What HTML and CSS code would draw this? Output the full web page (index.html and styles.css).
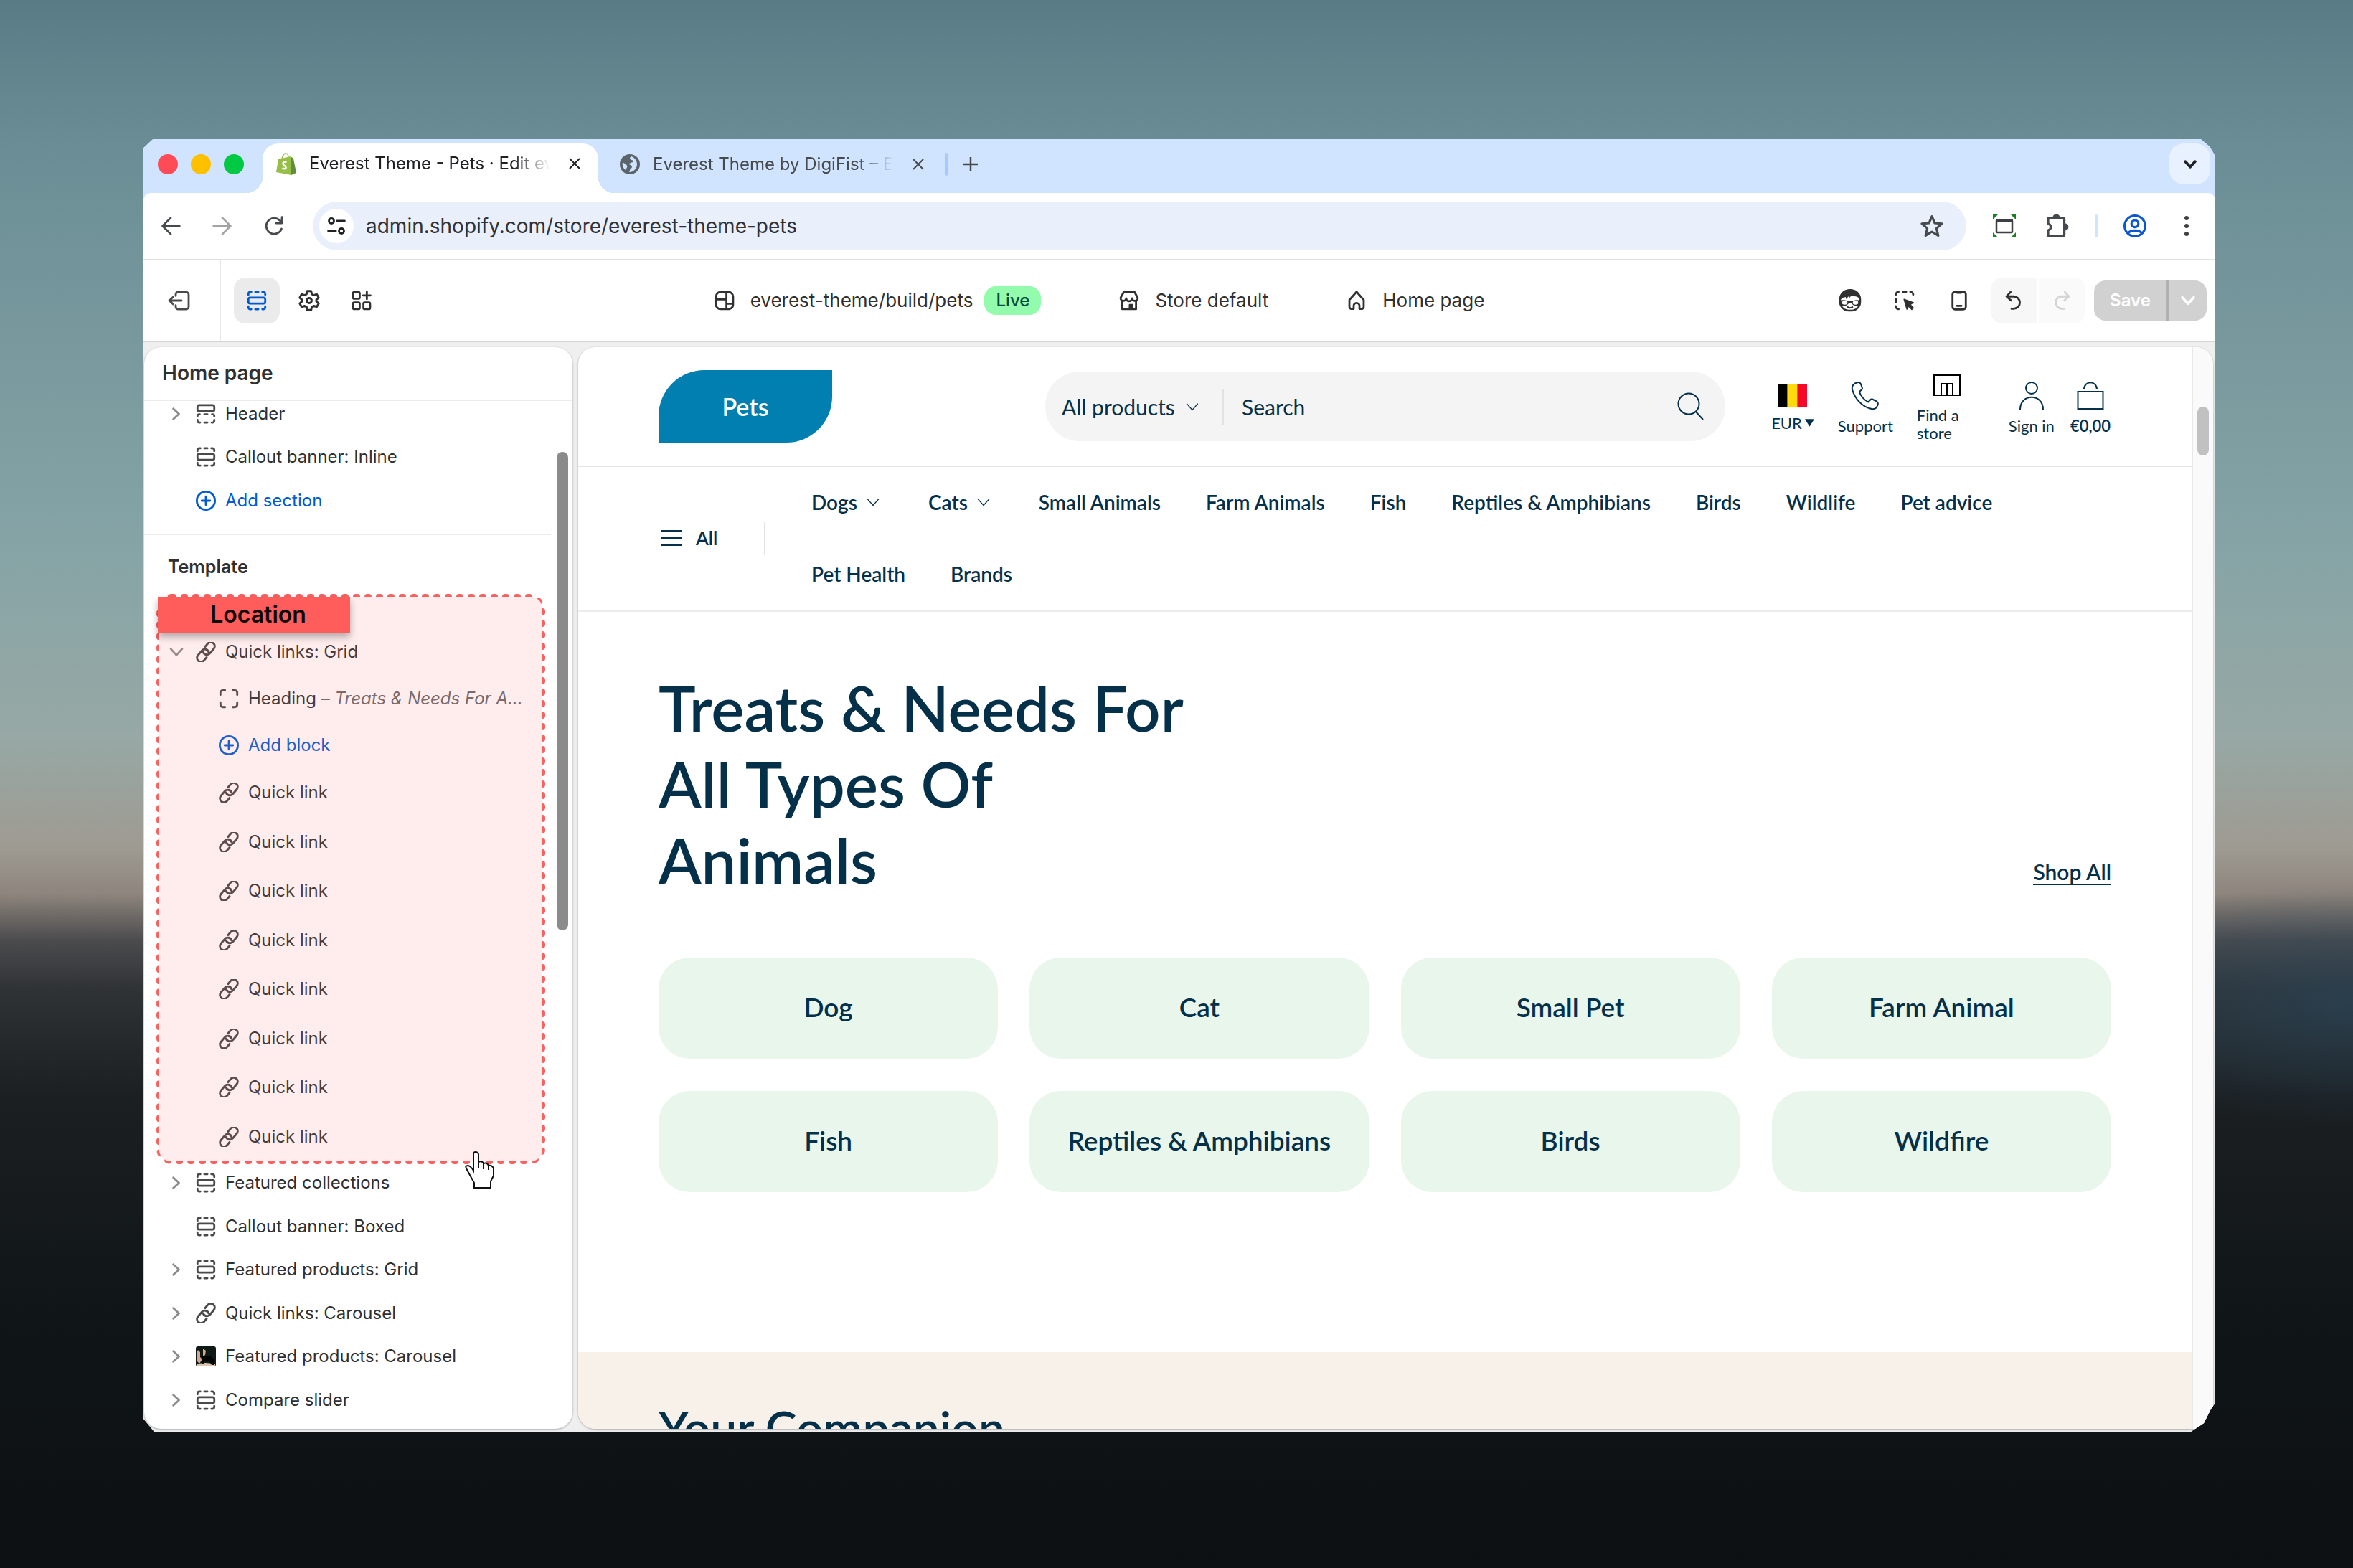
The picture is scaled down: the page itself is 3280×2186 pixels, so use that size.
FILE: index.html
```html
<!DOCTYPE html>
<html lang="en">
<head>
    <meta charset="UTF-8">
    <title>Everest Theme - Pets</title>
    <link rel="stylesheet" href="styles.css">
</head>
<body>
    <!-- icon sprite -->
    <svg class="sprite" xmlns="http://www.w3.org/2000/svg">
        <symbol id="section" viewBox="0 0 16 16">
            <rect x="1.3" y="5.6" width="13.4" height="4.8" rx="1.4"/>
            <path d="M1.3 3.4V2.6a1.6 1.6 0 0 1 1.3-1.5h1M6.8 1.1h2.4M12.4 1.1h.9a1.6 1.6 0 0 1 1.4 1.5v.8M1.3 12.6v.8a1.6 1.6 0 0 0 1.3 1.5h1M6.8 14.9h2.4M12.4 14.9h.9a1.6 1.6 0 0 0 1.4-1.5v-.8"/>
        </symbol>
        <symbol id="section-top" viewBox="0 0 16 16">
            <rect x="1.3" y="1.1" width="13.4" height="4.8" rx="1.4"/>
            <path d="M1.3 9.8v-.2a1.2 1.2 0 0 1 1.2-1.2h.6M6.8 8.4h2.4M12.9 8.4h.6a1.2 1.2 0 0 1 1.2 1.2v.2M1.3 12.8v.6a1.6 1.6 0 0 0 1.3 1.5h.8M6.8 14.9h2.4M12.6 14.9h.8a1.6 1.6 0 0 0 1.3-1.5v-.6"/>
        </symbol>
        <symbol id="link" viewBox="0 0 24 24">
            <g transform="rotate(-50 12 12) translate(-3 -3) scale(1.25)" stroke-width="2">
                <path d="M8.500 15.800H4.800a3.800 3.800 0 0 1 0-7.600h5.700a3.800 3.800 0 0 1 3.200 5.800"/>
                <path d="M15.500 8.200h3.700a3.800 3.800 0 0 1 0 7.600h-5.700a3.800 3.800 0 0 1-3.200-5.800"/>
            </g>
        </symbol>
        <symbol id="plus-circle" viewBox="0 0 16 16"><circle cx="8" cy="8" r="7.200"/><path d="M8 4.700v6.600M4.700 8h6.600"/></symbol>
        <symbol id="block" viewBox="0 0 16 16"><path d="M1.300 5V3.300a2 2 0 0 1 2-2H5M11 1.300h1.700a2 2 0 0 1 2 2V5M14.700 11v1.700a2 2 0 0 1-2 2H11M5 14.700H3.300a2 2 0 0 1-2-2V11"/></symbol>
        <symbol id="chev-right" viewBox="0 0 16 16"><path d="M5.500 3.800 10 8l-4.500 4.200"/></symbol>
        <symbol id="chev-down" viewBox="0 0 16 16"><path d="M3.500 5.500 8 10.500l4.500-5"/></symbol>
        <symbol id="close" viewBox="0 0 16 16"><path d="m1.500 1.500 13 13M14.500 1.500l-13 13"/></symbol>
    </svg>

    <main class="window">
        <header class="tabstrip">
            <div class="lights"><span class="red"></span><span class="yellow"></span><span class="green"></span></div>
            <div class="tab active">
                <svg class="favicon" viewBox="0 0 28 32">
                    <path d="M8 9c1-5 4-8 6-7 2 0 3 3 3 6" fill="none" stroke="#95bf47" stroke-width="1.500"/>
                    <path d="M3 10l17-4 1 26L0 28z" fill="#95bf47"/><path d="M20 6l4 3 4 20-7 3z" fill="#5e8e3e"/>
                    <path d="M14.500 14c-3-1-5 0-5 2 0 3 4 3 4 5.500 0 2-2.500 2.500-5 .5" fill="none" stroke="#fff" stroke-width="2.600"/>
                </svg>
                <span class="tab-title">Everest Theme - Pets · Edit everest</span>
                <button class="plain" aria-label="Close tab"><svg class="icon bold s16"><use href="#close"/></svg></button>
            </div>
            <div class="tab">
                <svg class="favicon" viewBox="0 0 28 28">
                    <circle cx="14" cy="14" r="14" fill="#5b636b"/>
                    <path d="M16 3c-3 2-2 4 0 5 2 0 3 1 2 3-2 1-5 1-5 3 2 1 4 2 4 4-1 2-3 2-3 5l-1 2a11 11 0 0 0 11-11c0-5-3-9-8-11zM4 11c2 2 5 2 6 5 1 2-1 3-1 5l-1 1a11 11 0 0 1-4-11z" fill="#d0e3ff"/>
                </svg>
                <span class="tab-title">Everest Theme by DigiFist – Everest</span>
                <button class="plain" aria-label="Close tab"><svg class="icon bold s16"><use href="#close"/></svg></button>
            </div>
            <span class="tab-divider"></span>
            <button class="plain new-tab" aria-label="New tab"><svg class="icon bold s20" viewBox="0 0 16 16"><path d="M8 0v16M0 8h16"/></svg></button>
            <button class="tab-search" aria-label="Search tabs"><svg class="icon heavy s24"><use href="#chev-down"/></svg></button>
        </header>

        <div class="toolbar">
            <div class="history">
                <button class="plain" aria-label="Back"><svg class="icon s28" viewBox="0 0 16 16"><path d="M15 8H1.500M8 1.500 1.500 8 8 14.500"/></svg></button>
                <button class="plain faded" aria-label="Forward"><svg class="icon s28" viewBox="0 0 16 16"><path d="M1 8h13.500M8 1.500 14.500 8 8 14.500"/></svg></button>
                <button class="plain" aria-label="Reload"><svg class="icon s28" viewBox="0 0 16 16"><path d="M14 10.300A6.300 6.300 0 1 1 12.600 3.600L14.200 5.400M14.300 1v4.700H9.600"/></svg></button>
            </div>
            <div class="urlbar">
                <button class="site-info" aria-label="Site information"><svg class="icon s28" viewBox="0 0 16 16"><circle cx="4" cy="4" r="2"/><path d="M8.500 4h6M1.500 12h6"/><circle cx="12" cy="12" r="2"/></svg></button>
                <input class="url" type="text" aria-label="Address" value="admin.shopify.com/store/everest-theme-pets">
                <button class="plain" aria-label="Bookmark"><svg class="icon s32" viewBox="0 0 16 16"><path d="m8 1.300 2 4.700 5 .4-3.800 3.300 1.200 5L8 12l-4.400 2.700 1.200-5L1 6.400 6 6z"/></svg></button>
            </div>
            <div class="extensions">
                <button class="plain capture" aria-label="Capture"><svg class="s32" viewBox="0 0 32 32"><path d="M0 0h7L0 7zM32 0v7l-7-7zM0 32v-7l7 7zM32 32h-7l7-7z" fill="#12831f"/><rect x="5" y="8" width="22" height="17" rx="1" fill="none" stroke="#3c4043" stroke-width="2.500"/><path d="M4 7h24v4H4z" fill="#3c4043"/></svg></button>
                <button class="plain" aria-label="Extensions"><svg class="icon s32" viewBox="0 0 16 16"><path d="M1.500 2.500H12a.8.8 0 0 1 .8.800v11a.8.8 0 0 1-.8.800H2.300a.8.8 0 0 1-.8-.8v-3.300a2.300 2.300 0 0 0 0-4.500z"/><path d="M5.500 2.200a1.700 1.700 0 0 1 3.400 0zM13.200 7a1.700 1.700 0 0 1 0 3.400z" fill="currentColor"/></svg></button>
                <span class="ext-divider"></span>
                <button class="plain profile" aria-label="Profile"><svg class="icon s32" viewBox="0 0 16 16"><circle cx="8" cy="8" r="7.200"/><circle cx="8" cy="6.400" r="2.400"/><path d="M3 13c2.500-2.400 7.500-2.400 10 0"/></svg></button>
                <button class="plain" aria-label="Menu"><svg class="s32" viewBox="0 0 32 32" fill="#3c4043"><circle cx="16" cy="5" r="3"/><circle cx="16" cy="16" r="3"/><circle cx="16" cy="27" r="3"/></svg></button>
            </div>
        </div>

        <div class="editor-bar">
            <button class="exit" aria-label="Exit"><svg class="icon light s32" viewBox="0 0 16 16"><path d="M5.500 4.700V3.700A1.800 1.800 0 0 1 7.300 1.900h5.200A2 2 0 0 1 14.500 3.900v8.200a2 2 0 0 1-2 2H7.300A1.800 1.800 0 0 1 5.500 12.300v-1M9.500 8H1M3.700 5.500 1 8l2.700 2.500"/></svg></button>
            <div class="tools">
                <button class="tool selected" aria-label="Sections"><svg class="icon s28"><use href="#section"/></svg></button>
                <button class="tool" aria-label="Theme settings"><svg class="icon s32" viewBox="0 0 24 24"><path class="mid" d="M10 2h4l.7 3.200 2.100 1.200 3.100-1 2 3.500-2.400 2.200v1.800l2.400 2.200-2 3.500-3.100-1-2.100 1.200L14 22h-4l-.7-3.200-2.100-1.200-3.100 1-2-3.500 2.400-2.200v-1.800L2.100 8.900l2-3.500 3.100 1 2.100-1.200z"/><circle class="mid" cx="12" cy="12" r="2.600"/></svg></button>
                <button class="tool" aria-label="App embeds"><svg class="icon s28" viewBox="0 0 16 16"><rect x="1.200" y="1.200" width="5.300" height="5.300" rx="1"/><rect x="1.200" y="9.500" width="5.300" height="5.300" rx="1"/><rect x="9.500" y="9.500" width="5.300" height="5.300" rx="1"/><path d="M12.200 1v5.800M9.300 3.900h5.800"/></svg></button>
            </div>
            <div class="crumbs">
                <button class="crumb"><svg class="icon s28" viewBox="0 0 16 16"><rect x="1.200" y="1.200" width="13.600" height="13.600" rx="3.500"/><path d="M9.500 1.500v13M1.500 7h8M9.500 10.500h5"/></svg>everest-theme/build/pets<span class="badge">Live</span></button>
                <button class="crumb"><svg class="icon s28" viewBox="0 0 16 16"><path d="M3.800 1h8.400l2.600 4.800a2.200 2.200 0 0 1-4.500.4 2.300 2.300 0 0 1-4.600 0 2.200 2.200 0 0 1-4.500-.4zM2.500 8.500v6.300h11V8.500M8.500 14.500v-3h2v3"/></svg>Store default</button>
                <button class="crumb"><svg class="icon s28" viewBox="0 0 16 16"><path d="M2.300 7.500 8 1l5.700 6.500v5.500a1.600 1.600 0 0 1-1.600 1.600h-1.800v-2.400a2.300 2.300 0 0 0-4.600 0v2.400H3.900A1.600 1.600 0 0 1 2.300 13z"/></svg>Home page</button>
            </div>
            <div class="actions">
                <button class="tool" aria-label="Sidekick"><svg class="s32" viewBox="0 0 32 32"><rect x="2" y="2" width="28" height="28" rx="12" fill="#fff" stroke="#303030" stroke-width="2.500"/><path d="M2 15C1 5 8 0 16 0s15 5 14 15c-2-4-5-5-9-5H17l-3 3v-3l-4 4v-3l-4 1z" fill="#303030"/><path d="M2 16c5-2 9 0 14 1 5-1 9-3 14-1v6c-4 3-9 2-12-2h-4c-3 4-8 5-12 2z" fill="#303030"/><ellipse cx="8.500" cy="19" rx="3.800" ry="2.800" fill="#fff"/><ellipse cx="23.500" cy="19" rx="3.800" ry="2.800" fill="#fff"/><path d="M12 24.500c3 2.500 5 2.500 8 0" fill="none" stroke="#303030" stroke-width="2"/></svg></button>
                <button class="tool" aria-label="Inspector"><svg class="icon s28" viewBox="0 0 16 16"><path d="M1 3.300A2.200 2.200 0 0 1 3.200 1M6.800 1h2.400M12.500 1A2.200 2.200 0 0 1 14.800 3.300M1 6.800v2.400M1 12.500A2.200 2.200 0 0 0 3.200 14.800"/><path d="m7.500 7 7.500 2.700-2.600 1.500 2.600 2.600-1.300 1.300-2.600-2.600L9.800 15z" fill="currentColor" stroke-width=".8"/></svg></button>
                <button class="tool" aria-label="Mobile preview"><svg class="icon s28" viewBox="0 0 16 16"><rect x="2.700" y="1" width="10.600" height="14" rx="2"/><path d="M6.200 12.200h3.600M6.500 1.800h3"/></svg></button>
                <div class="undo-group">
                    <button aria-label="Undo"><svg class="icon s28" viewBox="0 0 16 16"><path d="M5.500 1.200 2.300 4.700l3.500 3.200M2.500 4.700H8a4.900 4.900 0 0 1 0 9.800H6.300"/></svg></button>
                    <button class="faded" aria-label="Redo" disabled><svg class="icon s28" viewBox="0 0 16 16"><path d="m10.500 1.200 3.200 3.500-3.500 3.200M13.500 4.700H8a4.900 4.900 0 0 0 0 9.800h1.700"/></svg></button>
                </div>
                <div class="save-group">
                    <button class="save" disabled>Save</button>
                    <button class="save-more" aria-label="More save options" disabled><svg class="icon bold s28"><use href="#chev-down"/></svg></button>
                </div>
            </div>
        </div>

        <div class="workspace">
            <aside class="sidebar">
                <h1>Home page</h1>
                <div class="tree">
                    <ul class="rows scrolled">
                        <li><svg class="icon chev"><use href="#chev-right"/></svg><svg class="icon s28"><use href="#section-top"/></svg>Header</li>
                        <li><span class="chev"></span><svg class="icon s28"><use href="#section"/></svg>Callout banner: Inline</li>
                        <li><span class="chev"></span><button class="add"><svg class="icon s28"><use href="#plus-circle"/></svg>Add section</button></li>
                    </ul>
                    <h2>Template</h2>
                    <div class="location">
                        <svg class="outline"><rect x="4" y="4" rx="18"/></svg>
                        <span class="location-tag">Location</span>
                        <ul class="rows group">
                            <li><svg class="icon chev"><use href="#chev-down"/></svg><svg class="icon s28"><use href="#link"/></svg>Quick links: Grid</li>
                            <li class="child"><svg class="icon s28"><use href="#block"/></svg><span class="ellipsis">Heading <span class="note">– <i>Treats &amp; Needs For A...</i></span></span></li>
                            <li class="child"><button class="add"><svg class="icon s28"><use href="#plus-circle"/></svg>Add block</button></li>
                        </ul>
                        <ul class="rows links">
                            <li class="child"><svg class="icon s28"><use href="#link"/></svg>Quick link</li>
                            <li class="child"><svg class="icon s28"><use href="#link"/></svg>Quick link</li>
                            <li class="child"><svg class="icon s28"><use href="#link"/></svg>Quick link</li>
                            <li class="child"><svg class="icon s28"><use href="#link"/></svg>Quick link</li>
                            <li class="child"><svg class="icon s28"><use href="#link"/></svg>Quick link</li>
                            <li class="child"><svg class="icon s28"><use href="#link"/></svg>Quick link</li>
                            <li class="child"><svg class="icon s28"><use href="#link"/></svg>Quick link</li>
                            <li class="child"><svg class="icon s28"><use href="#link"/></svg>Quick link</li>
                        </ul>
                        <svg class="cursor" viewBox="0 0 42 52"><path d="M12 4q0-3 3-3t4 3v11q5-2 7 2 5-2 7 3 5-1 7 4v10l-4 8v9H13v-7L8 35 2 24q-2-4 2-4 4 0 8 7z" fill="#fff" stroke="#111" stroke-width="2"/><path d="M19 15v9M26 17v8M33 20v6" fill="none" stroke="#111" stroke-width="2"/></svg>
                    </div>
                    <ul class="rows after">
                        <li><svg class="icon chev"><use href="#chev-right"/></svg><svg class="icon s28"><use href="#section"/></svg>Featured collections</li>
                        <li><span class="chev"></span><svg class="icon s28"><use href="#section"/></svg>Callout banner: Boxed</li>
                        <li><svg class="icon chev"><use href="#chev-right"/></svg><svg class="icon s28"><use href="#section"/></svg>Featured products: Grid</li>
                        <li><svg class="icon chev"><use href="#chev-right"/></svg><svg class="icon s28"><use href="#link"/></svg>Quick links: Carousel</li>
                        <li><svg class="icon chev"><use href="#chev-right"/></svg><svg class="s28" viewBox="0 0 28 28"><rect width="28" height="28" rx="3" fill="#0f1913"/><path d="M3 5l3 3v7l3 3-4 6-4-4V9zM10 3l4 3-1 6-3 2z" fill="#cfa894"/><path d="M1 25q12-4 26 0v1a2 2 0 0 1-2 2H3a2 2 0 0 1-2-2z" fill="#dcc3ac"/><path d="M9 14h12l4 4v8h-3l-3-5h-7l-2 4H8z" fill="#020403"/></svg>Featured products: Carousel</li>
                        <li><svg class="icon chev"><use href="#chev-right"/></svg><svg class="icon s28"><use href="#section"/></svg>Compare slider</li>
                    </ul>
                    <span class="tree-scroll"></span>
                </div>
            </aside>

            <section class="preview">
                <div class="store">
                    <header class="store-header">
                        <a class="logo" href="#">Pets</a>
                        <form class="search">
                            <div class="category">
                                <select aria-label="Category"><option>All products</option></select>
                                <svg class="thin s28"><use href="#chev-down"/></svg>
                            </div>
                            <input type="text" placeholder="Search" aria-label="Search">
                            <button class="plain" aria-label="Submit search"><svg class="thin s40" viewBox="0 0 40 40"><circle cx="17" cy="16" r="14.500"/><path d="m27 27 10 11"/></svg></button>
                        </form>
                        <div class="shortcuts">
                            <button class="shortcut currency"><svg class="flag" viewBox="0 0 3 2" preserveAspectRatio="none"><path d="M0 0h1v2H0z"/><path d="M1 0h1v2H1z" fill="#ffd90c"/><path d="M2 0h1v2H2z" fill="#f5082a"/></svg><span class="small">EUR<svg class="caret" viewBox="0 0 10 8"><path d="M0 0h10L5 8z"/></svg></span></button>
                            <a class="shortcut" href="#"><svg class="thin s40" viewBox="0 0 40 40"><path d="M8 1.500c3-1 5 0 6 2l2 6c0 2-3 3-4 5 2 6 7 11 12 14 2-1 3-5 6-4l6 3c3 2 2 5 0 8-2 3-6 3-9 2C14 34 5 22 2 11 1 6 4 3 8 1.500z"/></svg><span>Support</span></a>
                            <a class="shortcut stores" href="#"><svg class="store-icon" viewBox="0 0 38 30"><path d="M1 1h36v28H1zM11 29V13h16v16M19 13v16" fill="none" stroke="#000" stroke-width="2"/></svg><span>Find a<br>store</span></a>
                            <a class="shortcut account" href="#"><svg class="thin s40" viewBox="0 0 40 40"><circle cx="20" cy="9" r="8"/><path d="M4 39c0-23 32-23 32 0"/></svg><span>Sign in</span></a>
                            <a class="shortcut cart" href="#"><svg class="thin s40" viewBox="0 0 40 40"><path d="M2.500 14h35v24h-35zM11 11c0-13 18-13 18 0"/></svg><span>€0,00</span></a>
                        </div>
                    </header>
                    <nav class="store-nav">
                        <button class="all"><svg class="thin s28" viewBox="0 0 28 28"><path d="M0 4h28M0 14h28M0 24h28"/></svg>All</button>
                        <ul>
                            <li><a href="#">Dogs<svg class="thin s28"><use href="#chev-down"/></svg></a></li>
                            <li><a href="#">Cats<svg class="thin s28"><use href="#chev-down"/></svg></a></li>
                            <li><a href="#">Small Animals</a></li>
                            <li><a href="#">Farm Animals</a></li>
                            <li><a href="#">Fish</a></li>
                            <li><a href="#">Reptiles &amp; Amphibians</a></li>
                            <li><a href="#">Birds</a></li>
                            <li><a href="#">Wildlife</a></li>
                            <li><a href="#">Pet advice</a></li>
                            <li><a href="#">Pet Health</a></li>
                            <li><a href="#">Brands</a></li>
                        </ul>
                    </nav>
                    <section class="quick-links">
                        <div class="quick-head">
                            <h2>Treats &amp; Needs For All Types Of Animals</h2>
                            <a class="shop-all" href="#">Shop All</a>
                        </div>
                        <div class="tiles">
                            <a href="#">Dog</a>
                            <a href="#">Cat</a>
                            <a href="#">Small Pet</a>
                            <a href="#">Farm Animal</a>
                            <a href="#">Fish</a>
                            <a href="#">Reptiles &amp; Amphibians</a>
                            <a href="#">Birds</a>
                            <a href="#">Wildfire</a>
                        </div>
                    </section>
                    <section class="companion">
                        <h2>Your Companion</h2>
                    </section>
                </div>
                <div class="store-scroll"><span></span></div>
            </section>
        </div>
    </main>
</body>
</html>
```
FILE: styles.css
```css
* {
    box-sizing: border-box;
}
body {
    margin: 0;
    height: 100vh;
    padding: 194px 192px 190px 200px;
    display: flex;
    font: 24px/32px Inter, "Liberation Sans", sans-serif;
    color: #303030;
    background:
        radial-gradient(ellipse 420px 170px at 100% 64%, rgba(40, 72, 94, .6), rgba(40, 72, 94, 0)),
        linear-gradient(#587b85 0%, #6a8d95 9%, #86a4a6 35%, #97a8a5 47%, #9e9b92 54%, #8e857d 57%, #4b4b4d 60%, #303336 63%, #1b1f22 70%, #101517 84%, #0c1012 100%);
}
ul {
    list-style: none;
    margin: 0;
    padding: 0;
}
h1, h2 {
    margin: 0;
}
a {
    color: inherit;
    text-decoration: none;
}
button, input, select {
    font: inherit;
    color: inherit;
    border: 0;
    padding: 0;
    margin: 0;
    background: none;
    outline: none;
}
svg {
    display: block;
    flex: none;
}
.sprite {
    display: none;
}
.icon {
    fill: none;
    stroke: currentColor;
    stroke-width: 1.6;
    stroke-linecap: round;
    stroke-linejoin: round;
}
.icon .mid {
    stroke-width: 2.2;
}
.light {
    stroke-width: 1.4;
}
.bold {
    stroke-width: 2;
}
.heavy {
    stroke-width: 2.6;
}
.thin {
    fill: none;
    stroke: #05304a;
    stroke-width: 2;
}
.s16 { width: 16px; height: 16px; }
.s20 { width: 20px; height: 20px; }
.s24 { width: 24px; height: 24px; }
.s28 { width: 28px; height: 28px; }
.s32 { width: 32px; height: 32px; }
.s40 { width: 40px; height: 40px; }

.window {
    flex: 1;
    min-width: 0;
    display: flex;
    flex-direction: column;
    background: #d0e3ff;
    clip-path: polygon(0 12px, 13px 0, calc(100% - 20px) 0, calc(100% - 8px) 10px, 100% 23px, 100% calc(100% - 40px), calc(100% - 6px) calc(100% - 32px), calc(100% - 16px) calc(100% - 12px), calc(100% - 34px) 100%, 15px 100%, 0 calc(100% - 18px));
}

/* tabs */
.tabstrip {
    height: 75px;
    display: flex;
    align-items: center;
    padding: 0 7px 6px 20px;
    color: #46494d;
}
.lights {
    display: flex;
    gap: 18px;
    margin-right: 26px;
    width: 120px;
}
.lights span {
    width: 28px;
    height: 28px;
    border-radius: 50%;
}
.lights .red { background: #ff4b57; }
.lights .yellow { background: #ffc000; }
.lights .green { background: #00c944; }
.tab {
    width: 455px;
    height: 69px;
    padding-left: 30px;
    display: flex;
    align-items: center;
    gap: 18px;
}
.tab.active {
    position: relative;
    align-self: flex-end;
    width: 468px;
    padding: 0 0 13px 19px;
    margin-bottom: -6px;
    background: #fff;
    border-radius: 22px 22px 0 0;
    color: #202124;
}
.tab.active::before, .tab.active::after {
    content: "";
    position: absolute;
    bottom: 0;
    width: 22px;
    height: 22px;
}
.tab.active::before {
    left: -22px;
    background: radial-gradient(circle at 0 0, transparent 22px, #fff 22px);
}
.tab.active::after {
    right: -22px;
    background: radial-gradient(circle at 100% 0, transparent 22px, #fff 22px);
}
.favicon {
    width: 28px;
    height: 32px;
}
.tab-title {
    width: 336px;
    overflow: hidden;
    white-space: nowrap;
    -webkit-mask-image: linear-gradient(to right, #000 85%, transparent);
    mask-image: linear-gradient(to right, #000 85%, transparent);
}
.tab .plain {
    margin-left: 8px;
}
.tab-divider {
    width: 4px;
    height: 32px;
    margin: 0 22px 0 28px;
    border-radius: 2px;
    background: #a8c9fb;
}
.tab-search {
    width: 57px;
    height: 57px;
    margin-left: auto;
    display: grid;
    place-items: center;
    border-radius: 20px;
    background: #e8f1ff;
    color: #202124;
}

/* address bar */
.toolbar {
    height: 94px;
    display: flex;
    align-items: center;
    padding: 0 24px;
    background: #fff;
    border-bottom: 2px solid #dfe1e2;
    border-radius: 10px 10px 0 0;
    color: #46494d;
}
.history {
    display: flex;
    gap: 44px;
}
.faded {
    opacity: .5;
}
.urlbar {
    flex: 1;
    height: 68px;
    margin: 0 37px 0 40px;
    padding: 0 32px 0 9px;
    display: flex;
    align-items: center;
    border-radius: 34px;
    background: #eaf0fb;
}
.site-info {
    width: 48px;
    height: 48px;
    display: grid;
    place-items: center;
    border-radius: 50%;
    background: #fff;
    color: #202124;
}
.url {
    flex: 1;
    margin-left: 17px;
    font-size: 28px;
    color: #303236;
}
.extensions {
    display: flex;
    align-items: center;
    gap: 36px;
}
.capture {
    margin-right: 6px;
}
.ext-divider {
    width: 4px;
    height: 32px;
    border-radius: 2px;
    background: #d0e3ff;
}
.profile {
    margin-right: 4px;
    color: #0b57d0;
}

/* editor top bar */
.editor-bar {
    height: 114px;
    display: flex;
    align-items: center;
    padding-right: 12px;
    background: #fff;
    border-bottom: 2px solid #d4d4d4;
}
.exit {
    align-self: stretch;
    width: 108px;
    padding-left: 34px;
    border-right: 2px solid #e8e8e8;
    color: #4a4a4a;
}
.tools, .actions, .crumbs {
    display: flex;
    align-items: center;
}
.tools {
    gap: 9px;
    margin-left: 18px;
}
.tool {
    width: 64px;
    height: 64px;
    display: grid;
    place-items: center;
    border-radius: 16px;
}
.tool.selected {
    background: #ebebeb;
    color: #005bd3;
}
.crumbs {
    gap: 109px;
    margin: 0 auto;
}
.crumb {
    display: flex;
    align-items: center;
    gap: 22px;
    font-size: 26px;
}
.badge {
    padding: 4px 16px;
    margin-left: -6px;
    border-radius: 16px;
    background: #92fcac;
    color: #014b40;
    font-size: 24px;
    font-weight: 500;
}
.actions {
    gap: 12px;
    margin-left: 18px;
}
.undo-group {
    display: flex;
    gap: 2px;
}
.undo-group button {
    width: 65px;
    height: 64px;
    display: grid;
    place-items: center;
    border-radius: 16px 0 0 16px;
    background: #f7f7f7;
}
.undo-group button:last-child {
    border-radius: 0 16px 16px 0;
    color: #aaa;
}
.save-group {
    display: flex;
    height: 56px;
    border-radius: 16px;
    overflow: hidden;
    background: #d1d1d1;
    color: #fff;
    font-weight: 600;
}
.save {
    width: 105px;
    border-right: 4px solid #b0b0b0;
}
.save-more {
    width: 52px;
    display: grid;
    place-items: center;
}

/* sidebar */
.workspace {
    flex: 1;
    min-height: 0;
    display: flex;
    gap: 8px;
    padding: 7px 3px 4px 1px;
    background: #efefef;
}
.sidebar {
    flex: 0 0 597px;
    display: flex;
    flex-direction: column;
    overflow: hidden;
    background: #fff;
    border-radius: 24px;
    box-shadow: 0 1px 3px rgba(0, 0, 0, .3);
}
.sidebar h1 {
    padding: 19px 25px 20px;
    border-bottom: 2px solid #ebebeb;
    font-size: 28px;
    line-height: 34px;
    font-weight: 600;
}
.tree {
    position: relative;
    flex: 1;
    min-height: 0;
}
.rows {
    display: grid;
    grid-template-columns: minmax(0, 1fr);
    grid-auto-rows: 1fr;
}
.rows li {
    display: flex;
    align-items: center;
    gap: 13px;
    padding-left: 31px;
    white-space: nowrap;
}
.rows .icon {
    color: #4a4a4a;
}
.rows .chev {
    width: 28px;
    height: 28px;
    color: #8a8a8a;
}
.rows .add, .rows .add .icon {
    color: #005bd3;
}
.add {
    display: flex;
    align-items: center;
    gap: 13px;
}
.scrolled {
    height: 181px;
    margin: -12px 30px 0 0;
}
.sidebar h2 {
    margin-right: 30px;
    padding: 28px 33px 22px;
    border-top: 2px solid #ebebeb;
    font-size: 25px;
    font-weight: 600;
}
.scrolled + h2 {
    margin-top: 16px;
}
.location {
    position: relative;
    isolation: isolate;
    width: 542px;
    margin-left: 17px;
    padding: 48px 4px 4px;
}
.location::before {
    content: "";
    position: absolute;
    inset: 4px;
    z-index: -1;
    border-radius: 16px;
    background: #ffedee;
}
/* dots sit half under the fill */
.outline {
    position: absolute;
    inset: 0;
    z-index: -2;
    width: 100%;
    height: 100%;
    fill: none;
    stroke: #f9615f;
    stroke-width: 8px;
    stroke-linecap: round;
    stroke-dasharray: 2 14;
}
.outline rect {
    width: calc(100% - 8px);
    height: calc(100% - 8px);
}
.location .rows {
    position: relative;
    color: #483b3c;
}
.location .icon {
    color: #5c4c4d;
}
.location .chev {
    color: #988a8b;
}
.location .add, .location .add .icon {
    color: #1f5ecb;
}
.location li {
    padding-left: 10px;
}
.location .child {
    padding: 0 12px 0 83px;
}
.location-tag {
    position: absolute;
    top: 4px;
    left: 2px;
    width: 268px;
    padding-left: 12px;
    background: #ff5c5c;
    color: #100808;
    font-size: 32px;
    line-height: 50px;
    font-weight: 600;
    text-align: center;
    box-shadow: 0 6px 10px rgba(0, 0, 0, .3);
}
.group {
    height: 195px;
}
.links {
    height: 548px;
}
.ellipsis {
    overflow: hidden;
    text-overflow: ellipsis;
}
.note {
    color: #7a6a6b;
}
.cursor {
    position: absolute;
    right: 70px;
    bottom: -34px;
    width: 42px;
    height: 52px;
    z-index: 1;
}
.after {
    height: 363px;
    margin-top: -4px;
}
.tree-scroll {
    position: absolute;
    top: 71px;
    right: 6px;
    width: 16px;
    height: 667px;
    border-radius: 8px;
    background: #8b8b8b;
}

/* store preview */
.preview {
    flex: 1;
    min-width: 0;
    display: flex;
    overflow: hidden;
    background: #fff;
    border-radius: 24px;
    box-shadow: 0 1px 3px rgba(0, 0, 0, .3);
    font-family: Lato, "Open Sans", sans-serif;
    color: #05304a;
}
.store {
    flex: 1;
    min-width: 0;
}
.store-scroll {
    width: 30px;
    padding: 83px 6px 0;
    border-left: 2px solid #e8e8e8;
    background: #fafafa;
}
.store-scroll span {
    display: block;
    height: 68px;
    border-radius: 8px;
    background: #c1c1c1;
}
.store-header {
    height: 167px;
    display: flex;
    align-items: center;
    padding: 0 113px 0 112px;
    border-bottom: 2px solid #e2e5e6;
}
.logo {
    width: 242px;
    margin-right: 297px;
    border-radius: 64px 0;
    background: #007fb0;
    color: #fff;
    font-size: 34px;
    line-height: 101px;
    font-weight: 600;
    text-align: center;
}
.search {
    flex: 1;
    min-width: 0;
    height: 97px;
    display: flex;
    align-items: center;
    padding: 0 28px 0 23px;
    border-radius: 48px;
    background: #f4f4f4;
    font-size: 30px;
}
.category {
    height: 50px;
    display: flex;
    align-items: center;
    padding-right: 28px;
    border-right: 2px solid #e0e3e5;
}
.category select {
    appearance: none;
    width: 168px;
}
.category svg, .store-nav li svg {
    stroke-width: .8;
}
.search input {
    flex: 1;
    min-width: 0;
    padding-left: 25px;
}
.search input::placeholder {
    color: #05304a;
    opacity: 1;
}
.shortcuts {
    display: flex;
    align-items: center;
    margin-left: 64px;
    padding-top: 4px;
    font-size: 22px;
    line-height: 25px;
}
.shortcut {
    display: flex;
    flex-direction: column;
    align-items: center;
    gap: 9px;
    margin-left: 33px;
}
.currency {
    margin-left: 0;
    gap: 10px;
}
.flag {
    width: 41px;
    height: 31px;
}
.small {
    display: flex;
    align-items: center;
    gap: 4px;
}
.caret {
    width: 13px;
    height: 11px;
    fill: #05304a;
}
.stores {
    width: 84px;
    gap: 14px;
}
.stores span {
    align-self: flex-start;
}
.store-icon {
    width: 38px;
    height: 30px;
}
.account {
    margin-left: 44px;
}
.cart {
    margin-left: 22px;
    font-weight: 600;
}
.store-nav {
    display: flex;
    align-items: center;
    padding: 0 112px;
    border-bottom: 2px solid #ebedee;
    font-size: 28px;
    font-weight: 600;
}
.all {
    width: 149px;
    height: 46px;
    margin-right: 64px;
    padding: 0 0 2px 4px;
    display: flex;
    align-items: center;
    gap: 20px;
    border-right: 2px solid #e0e3e5;
    font-size: 26px;
}
.store-nav ul {
    flex: 1;
    display: flex;
    flex-wrap: wrap;
    column-gap: 63px;
    padding-right: 64px;
}
.store-nav a {
    height: 100px;
    padding-bottom: 2px;
    display: flex;
    align-items: center;
    gap: 8px;
}
.quick-links {
    padding: 81px 112px 223px;
}
.quick-head {
    display: flex;
    align-items: flex-end;
    justify-content: space-between;
    margin-bottom: 83px;
}
.quick-head h2 {
    max-width: 750px;
    font-size: 87px;
    line-height: 106px;
    font-weight: 600;
}
.shop-all {
    margin-bottom: 18px;
    border-bottom: 2px solid #05304a;
    font-size: 30px;
    line-height: 34px;
    font-weight: 600;
}
.tiles {
    display: grid;
    grid-template-columns: repeat(4, 1fr);
    gap: 45px 44px;
}
.tiles a {
    padding-bottom: 3px;
    border-radius: 44px;
    background: #e9f6eb;
    font-size: 37px;
    line-height: 138px;
    font-weight: 600;
    text-align: center;
}
.companion {
    padding: 61px 112px;
    background: #f8f1e9;
}
.companion h2 {
    font-size: 66px;
    line-height: 88px;
    font-weight: 600;
}
```
